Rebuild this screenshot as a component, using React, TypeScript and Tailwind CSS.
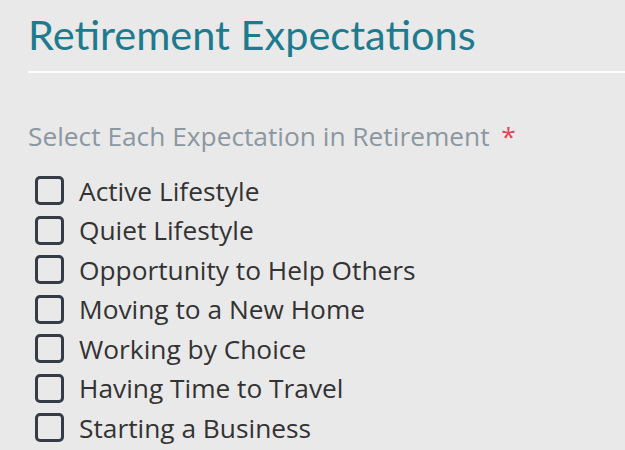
const options = [
  "Active Lifestyle",
  "Quiet Lifestyle",
  "Opportunity to Help Others",
  "Moving to a New Home",
  "Working by Choice",
  "Having Time to Travel",
  "Starting a Business",
];

export default function App() {
  return (
    <div className="w-[625px] h-[450px] overflow-hidden bg-[#e9e9e9] pl-[28px]">
      <h1 className="pt-[9px] text-[41.5px] leading-[50px] text-[#1e7b8e] font-['Lato',sans-serif] font-normal">
        Retirement Expectations
      </h1>
      <div className="mt-[12px] h-[2px] bg-white" />
      <div className="mt-[48px] text-[26.3px] leading-[30px] text-[#8b97a1] font-['Open_Sans',sans-serif]">
        Select Each Expectation in Retirement <span className="ml-[5px] text-[#e0455a]">*</span>
      </div>
      <ul className="mt-[20px] flex flex-col font-['Open_Sans',sans-serif]">
        {options.map((o) => (
          <li key={o} className="flex items-center gap-[15px] h-[39.5px] pl-[7px]">
            <span className="w-[29px] h-[29px] shrink-0 rounded-[5px] border-[3px] border-[#353c46]" />
            <span className="text-[26.3px] leading-[32px] text-[#333333]">{o}</span>
          </li>
        ))}
      </ul>
    </div>
  );
}
